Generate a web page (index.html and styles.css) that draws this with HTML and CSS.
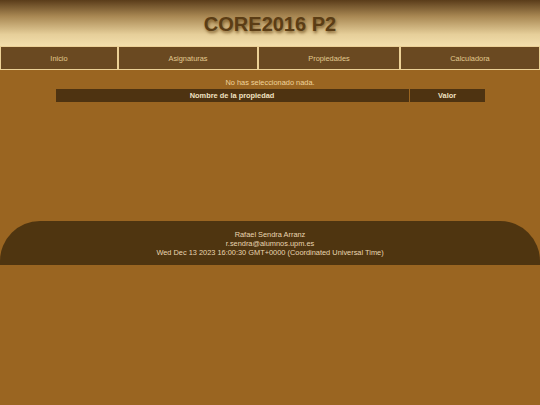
FILE: index.html
```html
<!DOCTYPE html>
<html lang="es">
<head>
<meta charset="utf-8">
<title>CORE2016 P2</title>
<link rel="stylesheet" href="styles.css">
</head>
<body>
<header class="top">
  <h1 class="title">CORE2016 P2</h1>
</header>
<nav class="menu">
  <a class="menu-item">Inicio</a>
  <a class="menu-item">Asignaturas</a>
  <a class="menu-item">Propiedades</a>
  <a class="menu-item">Calculadora</a>
</nav>
<main class="content">
  <p class="msg">No has seleccionado nada.</p>
  <table class="props">
    <thead>
      <tr><th class="col-name">Nombre de la propiedad</th><th class="col-val">Valor</th></tr>
    </thead>
  </table>
</main>
<footer class="foot">
  <div class="foot-line">Rafael Sendra Arranz</div>
  <div class="foot-line">r.sendra@alumnos.upm.es</div>
  <div class="foot-line">Wed Dec 13 2023 16:00:30 GMT+0000 (Coordinated Universal Time)</div>
</footer>
</body>
</html>
```
FILE: styles.css
```css
html, body {
  margin: 0;
  padding: 0;
}
body {
  background: #9a6521;
  font-family: "Liberation Sans", Arial, sans-serif;
  width: 540px;
  min-height: 405px;
}
.top {
  height: 46px;
  background: linear-gradient(to bottom, #5a3c1a 0%, #a88752 35%, #e6cf9a 75%, #f3dfac 100%);
  display: flex;
  align-items: center;
  justify-content: center;
}
.title {
  margin: 0;
  font-size: 20px;
  font-weight: bold;
  color: #5b3d15;
  text-shadow: 1px 2px 3px rgba(110, 75, 25, 0.75);
  line-height: 20px;
  padding-top: 1px;
}
.menu {
  display: grid;
  grid-template-columns: 118px 140px 142px 140px;
  background: #ecd196;
}
.menu-item {
  display: flex;
  align-items: center;
  justify-content: center;
  height: 22px;
  border: 1px solid #ecd196;
  background: #6a4921;
  color: #e2c98f;
  font-size: 7.4px;
}
.content {
  min-height: 151px;
  box-sizing: border-box;
  padding-top: 8px;
}
.msg {
  margin: 0 0 1px;
  text-align: center;
  font-size: 7.4px;
  line-height: 10px;
  color: #f0d49c;
}
.props {
  width: 431px;
  margin: 0 auto;
  border-collapse: separate;
  border-spacing: 1px 0;
}
.props th {
  background: #4e3311;
  color: #f1e2c2;
  font-size: 7.4px;
  font-weight: bold;
  height: 13px;
  padding: 0;
  text-align: center;
}
.col-name {
  width: 354px;
}
.col-val {
  width: 75px;
}
.foot {
  background: #4f3510;
  border-radius: 40px 40px 0 0;
  padding: 9px 0 8px;
  text-align: center;
  color: #ead6b0;
  font-size: 7.4px;
  line-height: 9px;
}
```
